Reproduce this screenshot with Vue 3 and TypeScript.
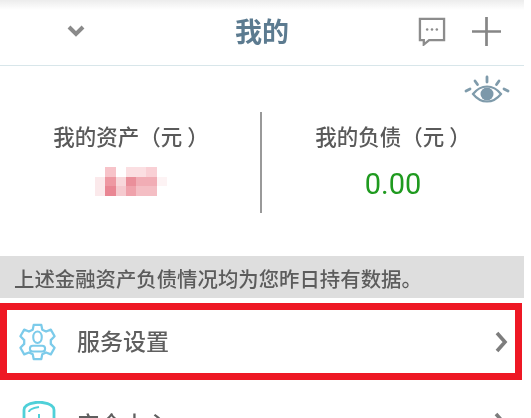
<template>
  <div class="page">
    <div class="top-strip"></div>
    <header class="nav">
      <div class="nav-left">
        <svg class="caret" width="18" height="12" viewBox="0 0 18 12">
          <path d="M2 2l7 7 7-7" fill="none" stroke="#8a8a8a" stroke-width="4" />
        </svg>
      </div>
      <div class="nav-title">我的</div>
      <div class="nav-right">
        <svg width="28" height="29" viewBox="0 0 29 30">
          <path d="M2 2h25v22H11.500l-5.500 4.500V24H2z" fill="none" stroke="#8c8c8c" stroke-width="2.400" />
          <circle cx="9.500" cy="13" r="1.300" fill="#8c8c8c" />
          <circle cx="14.500" cy="13" r="1.300" fill="#8c8c8c" />
          <circle cx="19.500" cy="13" r="1.300" fill="#8c8c8c" />
        </svg>
        <svg width="29" height="29" viewBox="0 0 30 30">
          <path d="M0 15h30M15 0v30" fill="none" stroke="#868686" stroke-width="2.800" />
        </svg>
      </div>
    </header>

    <section class="summary">
      <div class="eye-row">
        <svg width="46" height="30" viewBox="0 0 46 30">
          <path d="M9 19c8-10 20-10 28 0-8 10-20 10-28 0z" fill="none" stroke="#7f9bab" stroke-width="2.200" />
          <circle cx="23" cy="19" r="6.500" fill="#7c98aa" />
          <path
            d="M2 16l4-2M44 16l-4-2M11 6l2.500 3.500M35 6l-2.500 3.500M23 2v5"
            fill="none"
            stroke="#7f9bab"
            stroke-width="2.800"
            stroke-linecap="round"
          />
        </svg>
      </div>
      <div class="totals">
        <div class="total total-left">
          <div class="total-label">我的资产（元 ）</div>
          <div class="mosaic">
            <span v-for="(cell, i) in mosaic" :key="i" :style="{ background: cell }"></span>
          </div>
        </div>
        <div class="total total-right">
          <div class="total-label">我的负债（元 ）</div>
          <div class="total-value">0.00</div>
        </div>
      </div>
    </section>

    <div class="notice">上述金融资产负债情况均为您昨日持有数据。</div>

    <div class="row row-active">
      <svg class="row-icon" width="39" height="38" viewBox="0 0 40 40">
        <path
          d="M16 2h8l1 5 4 2 5-2 4 7-4 4v4l4 4-4 7-5-2-4 2-1 5h-8l-1-5-4-2-5 2-4-7 4-4v-4l-4-4 4-7 5 2 4-2z"
          fill="none"
          stroke="#7ccbea"
          stroke-width="2.400"
          stroke-linejoin="round"
        />
        <ellipse cx="20" cy="15" rx="4.500" ry="6" fill="none" stroke="#7ccbea" stroke-width="2.200" />
        <rect x="12" y="24" width="16" height="6" rx="3" fill="none" stroke="#7ccbea" stroke-width="2.200" />
      </svg>
      <span class="row-text">服务设置</span>
      <svg class="row-arrow" width="13" height="22" viewBox="0 0 13 22">
        <path d="M2 2l8 9-8 9" fill="none" stroke="#7d7d7d" stroke-width="3.600" />
      </svg>
    </div>

    <div class="row row-next">
      <svg class="row-icon" width="34" height="40" viewBox="0 0 34 40">
        <path d="M2 9c0-4 4-7 15-8 11 1 15 4 15 8v13c0 8-7 13-15 16C9 35 2 30 2 22z" fill="none" stroke="#4fd0d8" stroke-width="2.800" />
        <path d="M7 11c0-2 4-4 10-5M17 13v12" fill="none" stroke="#4fd0d8" stroke-width="2" />
      </svg>
      <span class="row-text">安全中心</span>
      <svg class="row-arrow" width="13" height="22" viewBox="0 0 13 22">
        <path d="M2 2l8 9-8 9" fill="none" stroke="#7d7d7d" stroke-width="3.600" />
      </svg>
    </div>
  </div>
</template>

<script setup lang="ts">
const mosaic: string[] = [
  '#fff', '#f7c3c9', '#fff', '#fbdfe2', '#fbdfe2', '#f9d0d5', '#fff',
  '#fbe9eb', '#ee98a2', '#f8d8db', '#ea8f9a', '#f1adb5', '#f1adb5', '#fdf3f4',
  '#fbe9eb', '#e98693', '#f5cacf', '#efa2ab', '#f4bec4', '#f4bec4', '#fff',
]
</script>

<style>
html,
body {
  background: #fff;
  overflow: hidden;
}
</style>

<style scoped>
.page {
  width: 524px;
  height: 418px;
  overflow: hidden;
  background: #fff;
  font-family: "Noto Sans CJK SC", "Liberation Sans", sans-serif;
  color: #555;
  filter: blur(0.7px);
}

.top-strip {
  height: 10px;
  background: linear-gradient(#ececec, #fff);
}

.nav {
  height: 56px;
  padding-bottom: 13px;
  box-sizing: border-box;
  display: flex;
  align-items: center;
  justify-content: space-between;
  border-bottom: 1px solid #d8e6ea;
}

.nav-left {
  width: 140px;
  padding-left: 67px;
  box-sizing: border-box;
  display: flex;
}

.nav-title {
  font-size: 27px;
  font-weight: 700;
  color: #5c7b90;
  line-height: 40px;
}

.nav-right {
  width: 140px;
  display: flex;
  gap: 26px;
  justify-content: flex-end;
  padding-right: 23px;
  box-sizing: border-box;
}

.summary {
  height: 189px;
  display: flex;
  flex-direction: column;
}

.eye-row {
  display: flex;
  justify-content: flex-end;
  padding: 9px 14px 0 0;
  height: 35px;
  box-sizing: border-box;
}

.totals {
  margin-top: 11px;
  height: 101px;
  display: flex;
}

.total {
  display: flex;
  flex-direction: column;
  align-items: center;
  box-sizing: border-box;
}

.total-left {
  width: 262px;
  padding-left: 2px;
  border-right: 2px solid #999;
}

.total-right {
  flex: 1;
}

.total-label {
  margin-top: 9px;
  font-size: 21.500px;
  line-height: 30px;
  font-weight: 500;
  color: #5a5a5a;
}

.mosaic {
  margin-top: 16px;
  display: grid;
  grid-template-columns: repeat(7, 10.300px);
  grid-auto-rows: 9.500px;
  filter: blur(0.6px);
}

.total-value {
  margin-top: 13px;
  font-family: Roboto, "Liberation Sans", sans-serif;
  font-size: 29px;
  line-height: 40px;
  color: #1f9a1f;
}

.notice {
  height: 42px;
  line-height: 45px;
  margin-top: 1px;
  background: #dedede;
  padding-left: 14px;
  font-size: 20.400px;
  font-weight: 500;
  color: #5c5c5c;
  white-space: nowrap;
}

.row {
  height: 77px;
  width: 522px;
  margin-top: 5px;
  box-sizing: border-box;
  display: flex;
  align-items: center;
  padding: 0 15px 0 18px;
  gap: 21px;
}

.row-active {
  border: 7px solid #ee1824;
  padding-left: 11px;
  padding-right: 7px;
  gap: 20px;
}

.row-active .row-text {
  margin-bottom: 3px;
}

.row-next {
  margin-top: 0;
  padding-top: 8px;
  padding-left: 22px;
}

.row-next .row-icon {
  align-self: flex-start;
  margin-top: 13px;
}

.row-text {
  flex: 1;
  font-size: 23px;
  font-weight: 500;
  color: #5f5f5f;
}
</style>
